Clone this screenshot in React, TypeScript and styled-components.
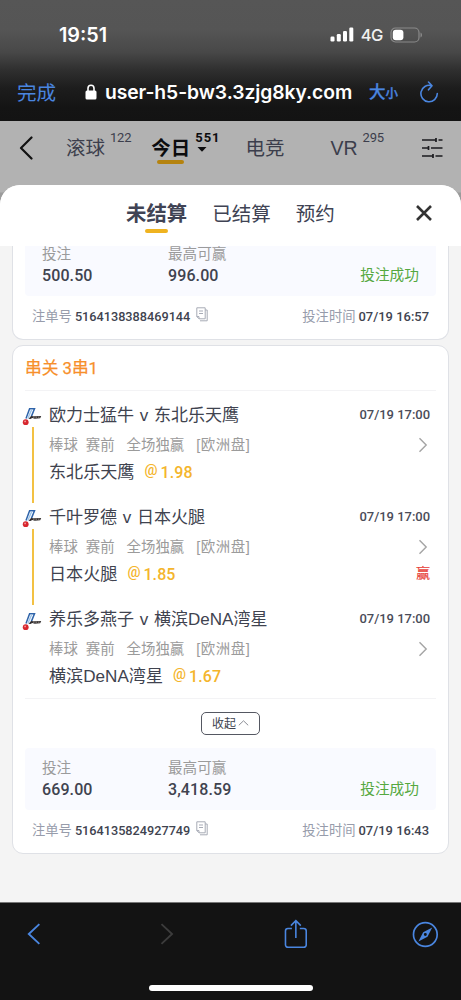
import React from "react";
import styled, { createGlobalStyle } from "styled-components";

const cjk = `"Noto Sans CJK SC", sans-serif`;

const GlobalStyle = createGlobalStyle`
  * { box-sizing: border-box; }
  body { margin: 0; background: #b2b2b2; }
  #root { font-family: "Liberation Sans", ${cjk}; }
`;

const Screen = styled.div`
  width: 461px;
  height: 1000px;
  display: flex;
  flex-direction: column;
  overflow: hidden;
  white-space: nowrap;
`;

/* browser chrome */
const BrowserTop = styled.header`
  flex: none;
  height: 121px;
  background: linear-gradient(#565656 0, #555 30px, #484848 52px, #2f2f2f 70px, #1d1d1d 88px, #141414 108px, #131313 100%);
  color: #fff;
`;
const StatusBar = styled.div`
  height: 69px;
  padding: 0 38px 0 59px;
  display: flex;
  align-items: center;
  justify-content: space-between;
`;
const Clock = styled.span`
  font: 600 19.8px/24px Inter, sans-serif;
`;
const Signals = styled.div`
  display: flex;
  align-items: center;
  gap: 7px;
`;
const Network = styled.span`
  font: 500 16.5px/20px Inter, sans-serif;
  letter-spacing: -0.4px;
  color: #f0f0f0;
`;
const AddressBar = styled.div`
  height: 46px;
  padding: 0 20px 0 17px;
  display: flex;
  align-items: center;
`;
const Done = styled.span`
  font: 400 19.5px/26px ${cjk};
  color: #4a86e0;
  margin-right: 29px;
`;
const Url = styled.span`
  width: 248px;
  margin-left: 8px;
  font: 600 19.3px/26px Inter, sans-serif;
  letter-spacing: -0.07px;
`;
const TextSize = styled.span`
  width: 50px;
  margin-left: 16px;
  font: 500 16.5px/24px ${cjk};
  -webkit-text-stroke: 0.3px #4a86e0;
  color: #4a86e0;
`;
const SmallGlyph = styled.span`
  font-size: 12.5px;
`;

/* dimmed sports navigation */
const SportsNav = styled.nav`
  flex: none;
  height: 64px;
  padding: 0 18px 11px 19px;
  display: flex;
  align-items: center;
  color: #3c3e4c;
`;
const NavItem = styled.div<{ $left: number; $active?: boolean }>`
  margin-left: ${(p) => p.$left}px;
  height: 36px;
  display: flex;
  font-size: 19.5px;
  line-height: 36px;
  font-weight: ${(p) => (p.$active ? 700 : 400)};
  color: ${(p) => (p.$active ? "#0c0c0e" : "#3c3e4c")};
`;
const NavLabel = styled.div`
  display: flex;
  flex-direction: column;
  align-items: center;
`;
const Underline = styled.i<{ $w: number; $color: string; $up: number }>`
  width: ${(p) => p.$w}px;
  height: 4px;
  margin-top: -${(p) => p.$up}px;
  border-radius: 2px;
  background: ${(p) => p.$color};
`;
const Count = styled.div<{ $active?: boolean }>`
  margin-left: 5px;
  display: flex;
  flex-direction: column;
  align-items: flex-start;
  font: ${(p) => (p.$active ? 700 : 400)} 13px/16px Roboto, sans-serif;
  letter-spacing: ${(p) => (p.$active ? 0.9 : -0.2)}px;
`;
const CountCaret = styled.svg`
  margin: 1px 0 0 2px;
`;
const FilterIcon = styled.svg`
  margin-left: auto;
`;

/* bottom sheet */
const Backdrop = styled.div`
  flex: 1;
  min-height: 0;
  display: flex;
  background: linear-gradient(#b2b2b2 7px, #9b9b9b 8px);
`;
const Sheet = styled.main`
  flex: 1;
  display: flex;
  flex-direction: column;
  border-radius: 20px 20px 0 0;
  overflow: hidden;
  background: #f4f4f4;
`;
const SheetHeader = styled.div`
  flex: none;
  height: 61px;
  padding: 0 28px 0 126px;
  display: flex;
  align-items: center;
  background: #fff;
`;
const Tab = styled.div<{ $active?: boolean }>`
  height: 41px;
  margin-right: 25px;
  display: flex;
  flex-direction: column;
  align-items: center;
  font-size: ${(p) => (p.$active ? 20.4 : 19.5)}px;
  line-height: 38px;
  font-weight: ${(p) => (p.$active ? 700 : 400)};
  color: #404354;
`;
const CloseIcon = styled.svg`
  margin: -5px 0 0 auto;
`;
const SheetBody = styled.div`
  flex: 1;
  padding: 0 12px;
  display: flex;
  flex-direction: column;
  gap: 5px;
`;
const Card = styled.section<{ $cut?: boolean }>`
  width: 437px;
  height: ${(p) => (p.$cut ? 94 : 509)}px;
  padding: 0 12px;
  border: 1px solid #dfe1e6;
  border-radius: ${(p) => (p.$cut ? "0 0 11px 11px" : "11px")};
  ${(p) => p.$cut && "border-top: 0;"}
  background: #fff;
`;
const CardTitle = styled.h2`
  margin: 0;
  height: 45px;
  border-bottom: 1px solid #f3f3f5;
  font: 400 16.7px/45px Roboto, ${cjk};
  -webkit-text-stroke: 0.25px #f78f2a;
  color: #f78f2a;
`;
const Legs = styled.div`
  height: 308px;
  padding-top: 13px;
  border-bottom: 1px solid #f3f3f5;
`;
const Leg = styled.article`
  height: 102.3px;
  display: flex;
`;
const Rail = styled.div`
  width: 24px;
  flex: none;
  display: flex;
  flex-direction: column;
  margin-left: -3px;
`;
const Thread = styled.i`
  width: 1.5px;
  height: 76px;
  margin: 0 0 0 10px;
  background: #f3c143;
`;
const LegBody = styled.div`
  flex: 1;
  margin-right: 6px;
  padding-left: 3px;
`;
const Line = styled.div<{ $h: number }>`
  height: ${(p) => p.$h}px;
  display: flex;
  align-items: center;
  justify-content: space-between;
`;
const Match = styled.span`
  font-size: 17.05px;
  line-height: 22px;
  word-spacing: 0.9px;
  color: #40434f;
`;
const Kickoff = styled.time`
  margin-top: -2px;
  font: 500 13px/20px Roboto, sans-serif;
  letter-spacing: -0.03px;
  color: #4a4c59;
`;
const Market = styled.div`
  display: flex;
  font-size: 14.4px;
  line-height: 20px;
  color: #9b9b9b;
`;
const MarketPart = styled.span<{ $gap: number }>`
  margin-right: ${(p) => p.$gap}px;
`;
const Region = styled.span`
  padding-left: 1px;
  letter-spacing: 0.6px;
`;
const Pick = styled.div`
  display: flex;
  align-items: center;
  font-size: 17.1px;
  line-height: 22px;
  color: #40434f;
`;
const At = styled.span`
  margin: -4px 3px 0 10px;
  font: 500 14.5px/20px Roboto, sans-serif;
  color: #f4b52c;
`;
const Odds = styled.span`
  font: 500 16px/22px Roboto, sans-serif;
  letter-spacing: 0.1px;
  color: #f4b52c;
`;
const Won = styled.span`
  margin-top: -4px;
  font-size: 14px;
  line-height: 20px;
  -webkit-text-stroke: 0.2px #e8453d;
  color: #e8453d;
`;
const FoldRow = styled.div`
  height: 48px;
  display: flex;
  justify-content: center;
  align-items: center;
`;
const FoldButton = styled.button`
  width: 59px;
  height: 23px;
  padding: 0;
  display: flex;
  align-items: center;
  justify-content: center;
  gap: 2px;
  border: 1.3px solid #555862;
  border-radius: 5px;
  background: #fff;
  font: 400 12px/18px ${cjk};
  color: #40434f;
`;
const Summary = styled.div<{ $cut?: boolean }>`
  width: 411px;
  height: ${(p) => (p.$cut ? 50 : 62)}px;
  padding: 0 17px 9px;
  display: flex;
  align-items: flex-end;
  border-radius: ${(p) => (p.$cut ? "0 0 4px 4px" : "4px")};
  background: #f9faff;
`;
const SummarySlot = styled.div<{ $cut?: boolean }>`
  padding-top: ${(p) => (p.$cut ? 0 : 1)}px;
`;
const Stat = styled.div`
  width: 126px;
  display: flex;
  flex-direction: column;
`;
const StatLabel = styled.span`
  font-size: 14.6px;
  line-height: 21px;
  color: #9b9b9b;
`;
const StatValue = styled.span`
  font: 500 16px/22px Roboto, sans-serif;
  letter-spacing: 0.1px;
  color: #40434f;
`;
const Status = styled.span`
  margin: 0 0 1px auto;
  font-size: 14.7px;
  line-height: 22px;
  color: #55a840;
`;
const Footer = styled.div`
  height: 41px;
  padding: 0 7px 0 7px;
  display: flex;
  align-items: center;
  font-size: 13.3px;
  line-height: 20px;
  color: #979cab;
`;
const FooterValue = styled.span<{ $size: number }>`
  margin-left: 3px;
  font: 500 ${(p) => p.$size}px/20px Roboto, sans-serif;
  color: #40434f;
`;
const FooterTime = styled.div`
  margin-left: auto;
  display: flex;
`;
const CopyIcon = styled.svg`
  margin: -5px 0 0 6px;
`;

/* browser toolbar */
const BrowserBottom = styled.footer`
  flex: none;
  height: 98px;
  border-top: 1px solid #777;
  background: #131313;
  display: flex;
  flex-direction: column;
  align-items: center;
`;
const Tools = styled.div`
  width: 100%;
  height: 62px;
  padding: 0 22px 0 27px;
  display: flex;
  align-items: center;
`;
const Tool = styled.svg<{ $left: number }>`
  margin-left: ${(p) => p.$left}px;
`;
const HomeBar = styled.i`
  width: 164px;
  height: 6px;
  margin-top: 20px;
  border-radius: 3px;
  background: #fff;
`;

const LeagueLogo = () => (
  <svg width="20" height="23" viewBox="0 0 20 23">
    <path d="M4 14.500 7.600 4.700h4.900L9.300 12.600" fill="none" stroke="#2f64aa" strokeWidth="1.500" />
    <path d="M5.800 14.500 9.700 5.500" stroke="#9cc4ea" strokeWidth="1.400" />
    <path d="M6.500 14.800l2.600-2.900 2.400.4 7.700-.3-1 2.300-5.400.4-2.500-.6-1.800 1z" fill="#332f30" />
    <path d="M11 13.200h6.500" stroke="#c9bdb6" strokeWidth=".6" strokeDasharray="1.500 1" />
    <circle cx="3.700" cy="18.200" r="2.900" fill="#d7262e" />
    <circle cx="3.100" cy="17.400" r=".9" fill="#f19a9c" />
  </svg>
);

const Chevron = () => (
  <svg width="12" height="16" viewBox="0 0 12 16" fill="none" stroke="#a4a4a4" strokeWidth="1.400">
    <path d="M1.500 1.200 8.200 8l-6.700 6.800" />
  </svg>
);

interface LegData {
  match: string;
  pick: string;
  odds: string;
  won?: boolean;
}

const legs: LegData[] = [
  { match: "欧力士猛牛 v 东北乐天鹰", pick: "东北乐天鹰", odds: "1.98" },
  { match: "千叶罗德 v 日本火腿", pick: "日本火腿", odds: "1.85", won: true },
  { match: "养乐多燕子 v 横滨DeNA湾星", pick: "横滨DeNA湾星", odds: "1.67" },
];

const BetLeg = ({ leg, last }: { leg: LegData; last: boolean }) => (
  <Leg>
    <Rail>
      <LeagueLogo />
      {!last && <Thread />}
    </Rail>
    <LegBody>
      <Line $h={23}>
        <Match>{leg.match}</Match>
        <Kickoff>07/19 17:00</Kickoff>
      </Line>
      <Line $h={35}>
        <Market>
          <MarketPart $gap={8}>棒球</MarketPart>
          <MarketPart $gap={12}>赛前</MarketPart>
          <MarketPart $gap={11}>全场独赢</MarketPart>
          <Region>[欧洲盘]</Region>
        </Market>
        <Chevron />
      </Line>
      <Line $h={21}>
        <Pick>
          {leg.pick}
          <At>@</At>
          <Odds>{leg.odds}</Odds>
        </Pick>
        {leg.won && <Won>赢</Won>}
      </Line>
    </LegBody>
  </Leg>
);

interface SlipProps {
  stake: string;
  payout: string;
  id: string;
  time: string;
  cut?: boolean;
}

const SlipSummary = ({ stake, payout, id, time, cut }: SlipProps) => (
  <SummarySlot $cut={cut}>
    <Summary $cut={cut}>
      <Stat>
        <StatLabel>投注</StatLabel>
        <StatValue>{stake}</StatValue>
      </Stat>
      <Stat>
        <StatLabel>最高可赢</StatLabel>
        <StatValue>{payout}</StatValue>
      </Stat>
      <Status>投注成功</Status>
    </Summary>
    <Footer>
      注单号<FooterValue $size={12.7}>{id}</FooterValue>
      <CopyIcon width="12" height="15" viewBox="0 0 12 15" fill="none" stroke="#a7abb6" strokeWidth="1">
        <path d="M.8.8h8.400v11H3L.8 9.600zM.8 9.600H3v2.200M3 4h4M3 6.500h4M9.200 3h2v10.800H4" />
      </CopyIcon>
      <FooterTime>
        投注时间<FooterValue $size={12.95}>{time}</FooterValue>
      </FooterTime>
    </Footer>
  </SummarySlot>
);

export default function App() {
  return (
    <Screen>
      <GlobalStyle />
      <BrowserTop>
        <StatusBar>
          <Clock>19:51</Clock>
          <Signals>
            <svg width="24" height="15" viewBox="0 0 24 15" fill="#fff">
              <rect x="0.5" y="9.500" width="4" height="5" rx="1.200" />
              <rect x="6.800" y="7" width="4" height="7.500" rx="1.200" />
              <rect x="13" y="4" width="4" height="10.500" rx="1.200" />
              <rect x="19.300" y="0.5" width="4" height="14" rx="1.200" />
            </svg>
            <Network>4G</Network>
            <svg width="33" height="16" viewBox="0 0 33 16">
              <rect x="1" y="1" width="28" height="14" rx="4.500" fill="none" stroke="#8a8a8a" strokeWidth="1.200" />
              <rect x="2.800" y="2.800" width="10.600" height="10.400" rx="3" fill="#fff" />
              <path d="M30.500 5.500c2 .8 2 4.200 0 5z" fill="#8a8a8a" />
            </svg>
          </Signals>
        </StatusBar>
        <AddressBar>
          <Done>完成</Done>
          <svg width="12" height="16" viewBox="0 0 12 16">
            <path d="M3 7V4.300a3 3 0 0 1 6 0V7" fill="none" stroke="#fff" strokeWidth="1.600" />
            <rect x="0.5" y="6.500" width="11" height="9" rx="1.500" fill="#fff" />
          </svg>
          <Url>user-h5-bw3.3zjg8ky.com</Url>
          <TextSize>
            大<SmallGlyph>小</SmallGlyph>
          </TextSize>
          <svg width="20" height="22" viewBox="0 0 20 22" fill="none" stroke="#4a86e0" strokeWidth="1.600" strokeLinecap="round" strokeLinejoin="round">
            <path d="M18.300 12.500A8.200 8.200 0 1 1 12.500 4.700M9.500 1l3.500 3.800L9.500 8.800" />
          </svg>
        </AddressBar>
      </BrowserTop>

      <SportsNav>
        <svg width="14" height="24" viewBox="0 0 14 24" fill="none" stroke="#111" strokeWidth="2.200" strokeLinecap="round" strokeLinejoin="round">
          <path d="M12.500 1.500 2 12l10.500 10.500" />
        </svg>
        <NavItem $left={33}>
          滚球<Count>122</Count>
        </NavItem>
        <NavItem $left={20} $active>
          <NavLabel>
            今日
            <Underline $w={27} $color="#b5830f" $up={6} />
          </NavLabel>
          <Count $active>
            551
            <CountCaret width="10" height="6" viewBox="0 0 10 6" fill="#0c0c0e">
              <path d="M.5 0h9L5 4.800z" />
            </CountCaret>
          </Count>
        </NavItem>
        <NavItem $left={25}>电竞</NavItem>
        <NavItem $left={46}>
          VR<Count>295</Count>
        </NavItem>
        <FilterIcon width="21" height="20" viewBox="0 0 21 20" fill="none" stroke="#1b1b1f" strokeWidth="1.700">
          <path d="M0 2h14M16.500 2H20.500M14 0v4M0 10h6.500M9 10H20.500M6.500 8v4M0 18h11M13.500 18H20.500M11 16v4" />
        </FilterIcon>
      </SportsNav>

      <Backdrop>
        <Sheet>
          <SheetHeader>
            <Tab $active>
              未结算
              <Underline $w={23} $color="#efb320" $up={4} />
            </Tab>
            <Tab>已结算</Tab>
            <Tab>预约</Tab>
            <CloseIcon width="18" height="18" viewBox="0 0 18 18" stroke="#333" strokeWidth="2.600">
              <path d="M2 2l14 14M16 2 2 16" />
            </CloseIcon>
          </SheetHeader>
          <SheetBody>
            <Card $cut>
              <SlipSummary cut stake="500.50" payout="996.00" id="5164138388469144" time="07/19 16:57" />
            </Card>
            <Card>
              <CardTitle>串关 3串1</CardTitle>
              <Legs>
                {legs.map((leg, i) => (
                  <BetLeg key={leg.match} leg={leg} last={i === legs.length - 1} />
                ))}
              </Legs>
              <FoldRow>
                <FoldButton>
                  收起
                  <svg width="11" height="6" viewBox="0 0 11 6" fill="none" stroke="#8a8c94" strokeWidth="1">
                    <path d="M.8 5.300 5.500.8l4.700 4.500" />
                  </svg>
                </FoldButton>
              </FoldRow>
              <SlipSummary stake="669.00" payout="3,418.59" id="5164135824927749" time="07/19 16:43" />
            </Card>
          </SheetBody>
        </Sheet>
      </Backdrop>

      <BrowserBottom>
        <Tools>
          <Tool $left={0} width="14" height="22" viewBox="0 0 14 22" fill="none" stroke="#4a86e0" strokeWidth="1.900">
            <path d="M12.500 1 1.800 11l10.700 10" />
          </Tool>
          <Tool $left={119} width="14" height="22" viewBox="0 0 14 22" fill="none" stroke="#3c3c3c" strokeWidth="1.900">
            <path d="M1.500 1l10.700 10L1.500 21" />
          </Tool>
          <Tool $left={110} width="24" height="30" viewBox="0 0 24 30" fill="none" stroke="#4a86e0" strokeWidth="1.600">
            <path d="M8 9.500H4A2.500 2.500 0 0 0 1.500 12v14A2.500 2.500 0 0 0 4 28.500h16a2.500 2.500 0 0 0 2.500-2.500V12A2.500 2.500 0 0 0 20 9.500h-4M12 19V2M7 6.500 12 1.500l5 5" />
          </Tool>
          <Tool $left={105} width="27" height="27" viewBox="0 0 27 27">
            <circle cx="13.500" cy="13.500" r="12" fill="none" stroke="#4a86e0" strokeWidth="1.700" />
            <path fillRule="evenodd" d="M20.500 6.500 15.700 15.700 6.500 20.500 11.300 11.300zM13.500 12a1.500 1.500 0 1 0 0 3 1.500 1.500 0 0 0 0-3z" fill="#4a86e0" />
          </Tool>
        </Tools>
        <HomeBar />
      </BrowserBottom>
    </Screen>
  );
}
